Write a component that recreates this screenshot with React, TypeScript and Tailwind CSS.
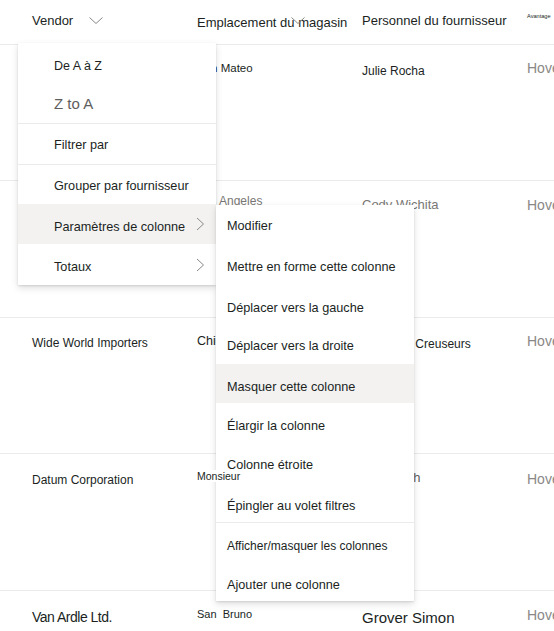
import React from "react";

const Chevron = () => (
  <svg width="9" height="14" viewBox="0 0 9 14" className="shrink-0">
    <polyline points="1,1 7.5,7 1,13" fill="none" stroke="#8a8886" strokeWidth="1" />
  </svg>
);

const ChevronDown = ({ className = "" }: { className?: string }) => (
  <svg width="14" height="7" viewBox="0 0 14 7" className={className}>
    <polyline points="0.5,0.5 7,6.5 13.5,0.5" fill="none" stroke="#8a8886" strokeWidth="1" />
  </svg>
);

interface ItemProps {
  label: string;
  h: string;
  text: string;
  active?: boolean;
  sub?: boolean;
}

function MainItem({ label, h, text, active, sub }: ItemProps) {
  return (
    <div
      className={`flex items-center justify-between pl-[36px] pr-[11px] ${h} ${
        active ? "bg-[#f3f2f1]" : ""
      }`}
    >
      <span className={`whitespace-nowrap ${text}`}>{label}</span>
      {sub && <Chevron />}
    </div>
  );
}

function SubItem({ label, h, text, active }: ItemProps) {
  return (
    <div className={`flex items-center pl-[11px] ${h} ${active ? "bg-[#f3f2f1]" : ""}`}>
      <span className={`whitespace-nowrap ${text}`}>{label}</span>
    </div>
  );
}

const Divider = () => <div className="h-px bg-[#edebe9]" />;

export default function App() {
  return (
    <div className="relative w-[554px] h-[631px] overflow-hidden bg-white text-[#201f1e] font-['Liberation_Sans',Arial,sans-serif]">
      {/* Header */}
      <div className="grid grid-cols-[165px_165px_165px_1fr] pl-[32px] h-[45px] border-b border-[#edebe9] whitespace-nowrap">
        <div className="flex items-start pt-[13px]">
          <span className="text-[13px] leading-[16px]">Vendor</span>
          <ChevronDown className="ml-[16px] mt-[4px]" />
        </div>
        <div className="relative pt-[15px] text-[13px] leading-[16px]">
          Emplacement du magasin
          <ChevronDown className="absolute left-[94px] top-[17px]" />
        </div>
        <div className="pt-[13px] text-[13px] leading-[16px]">Personnel du fournisseur</div>
        <div className="pt-[13px] text-[5.6px] leading-[7px]">Avantage</div>
      </div>

      {/* Row 1 */}
      <div className="grid grid-cols-[165px_165px_165px_1fr] pl-[32px] h-[136px] border-b border-[#edebe9] whitespace-nowrap">
        <div className="pt-[18px] text-[12px] leading-[16px]">Fabrikam, Inc.</div>
        <div className="pt-[16px] text-[11.5px] leading-[14px]">San Mateo</div>
        <div className="pt-[18px] text-[12px] leading-[16px]">Julie Rocha</div>
        <div className="pt-[14px] text-[14px] leading-[18px] text-[#8a8886]">Hover</div>
      </div>

      {/* Row 2 */}
      <div className="grid grid-cols-[165px_165px_165px_1fr] pl-[32px] h-[137px] border-b border-[#edebe9] whitespace-nowrap">
        <div className="pt-[18px] text-[12px] leading-[16px]">Contoso Ltd.</div>
        <div className="pt-[12px] text-[12px] leading-[16px] text-[#797775]">Los Angeles</div>
        <div className="pt-[16px] text-[13px] leading-[16px] text-[#797775]">Cody Wichita</div>
        <div className="pt-[15px] text-[14px] leading-[18px] text-[#8a8886]">Hover</div>
      </div>

      {/* Row 3 */}
      <div className="grid grid-cols-[165px_165px_165px_1fr] pl-[32px] h-[136px] border-b border-[#edebe9] whitespace-nowrap">
        <div className="pt-[17px] text-[12px] leading-[16px]">Wide World Importers</div>
        <div className="pt-[15px] text-[12.5px] leading-[16px]">Chicago</div>
        <div className="pt-[18px] text-[12px] leading-[16px]">Les Bons Creuseurs</div>
        <div className="pt-[14px] text-[14px] leading-[18px] text-[#8a8886]">Hover</div>
      </div>

      {/* Row 4 */}
      <div className="grid grid-cols-[165px_165px_165px_1fr] pl-[32px] h-[137px] border-b border-[#edebe9] whitespace-nowrap">
        <div className="pt-[18px] text-[12px] leading-[16px]">Datum Corporation</div>
        <div className="pt-[16px] text-[10.5px] leading-[13px]">
          <span className="relative z-30 bg-white">Monsieur</span>
        </div>
        <div className="pt-[16px] text-[13px] leading-[16px] text-[#605e5c]">Mira Bach</div>
        <div className="pt-[16px] text-[14px] leading-[18px] text-[#8a8886]">Hover</div>
      </div>

      {/* Row 5 */}
      <div className="grid grid-cols-[165px_165px_165px_1fr] pl-[32px] h-[60px] whitespace-nowrap">
        <div className="pt-[17px] text-[14px] leading-[18px] tracking-[-0.5px]">Van Ardle Ltd.</div>
        <div className="pt-[16px] text-[11px] leading-[14px]">
          <span className="bg-white pr-[5px]">San&nbsp; Bruno</span>
        </div>
        <div className="pt-[18px] text-[15px] leading-[18px]">Grover Simon</div>
        <div className="pt-[15px] text-[14px] leading-[18px] text-[#8a8886]">Hover</div>
      </div>

      {/* Column menu */}
      <div className="absolute left-[18px] top-[43px] z-10 w-[198px] bg-white shadow-[0_3.2px_7.2px_0_rgba(0,0,0,0.13),0_0.6px_1.8px_0_rgba(0,0,0,0.11)]">
        <MainItem label="De A à Z" h="h-[40px]" text="pt-[6px] text-[12.5px] leading-[16px]" />
        <MainItem label="Z to A" h="h-[40px]" text="pt-[2px] text-[15px] leading-[18px] text-[#605e5c]" />
        <Divider />
        <MainItem label="Filtrer par" h="h-[40px]" text="pt-[1px] text-[12.7px] leading-[16px]" />
        <Divider />
        <MainItem label="Grouper par fournisseur" h="h-[39px]" text="pt-[2px] text-[12.7px] leading-[16px]" />
        <MainItem label="Paramètres de colonne" h="h-[40px]" active sub text="pt-[5px] text-[12.7px] leading-[16px]" />
        <MainItem label="Totaux" h="h-[41px]" sub text="pt-[4px] text-[12.7px] leading-[16px]" />
      </div>

      {/* Submenu */}
      <div className="absolute left-[216px] top-[205px] z-20 w-[198px] bg-white shadow-[0_3.2px_7.2px_0_rgba(0,0,0,0.13),0_0.6px_1.8px_0_rgba(0,0,0,0.11)]">
        <SubItem label="Modifier" h="h-[40px]" text="pt-[1px] text-[12.7px] leading-[16px]" />
        <SubItem label="Mettre en forme cette colonne" h="h-[40px]" text="pt-[4px] text-[12.7px] leading-[16px]" />
        <SubItem label="Déplacer vers la gauche" h="h-[40px]" text="pt-[5px] text-[12.7px] leading-[16px]" />
        <SubItem label="Déplacer vers la droite" h="h-[39px]" text="pt-[3px] text-[12.7px] leading-[16px]" />
        <SubItem label="Masquer cette colonne" h="h-[39px]" active text="pt-[6px] text-[12.7px] leading-[16px]" />
        <SubItem label="Élargir la colonne" h="h-[40px]" text="pt-[5px] text-[12.7px] leading-[16px]" />
        <SubItem label="Colonne étroite" h="h-[40px]" text="pt-[4px] text-[12.7px] leading-[16px]" />
        <SubItem label="Épingler au volet filtres" h="h-[39px]" text="pt-[6px] text-[12.7px] leading-[16px]" />
        <Divider />
        <SubItem label="Afficher/masquer les colonnes" h="h-[39px]" text="pt-[6px] text-[12px] leading-[16px]" />
        <SubItem label="Ajouter une colonne" h="h-[39px]" text="pt-[7px] text-[12.7px] leading-[16px]" />
      </div>
    </div>
  );
}
